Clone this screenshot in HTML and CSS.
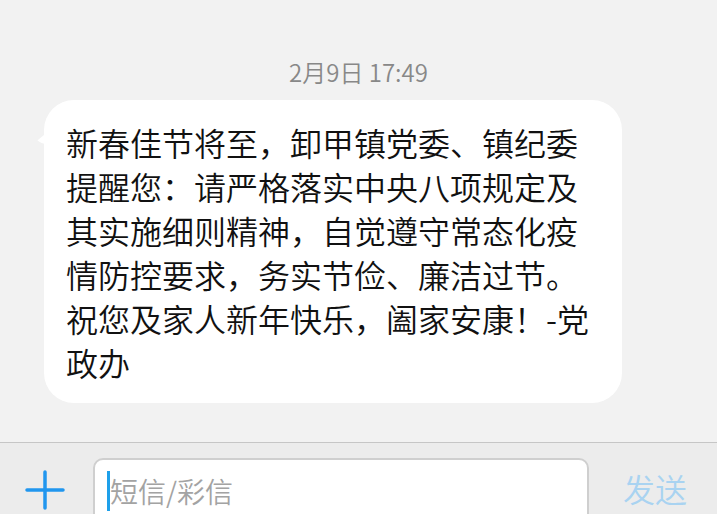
FILE: index.html
```html
<!DOCTYPE html>
<html lang="zh-CN">
  <head>
    <meta charset="UTF-8" />
    <meta name="viewport" content="width=device-width, initial-scale=1.0" />
    <title>短信</title>
    <link rel="stylesheet" href="styles.css">
  </head>
  <body>
    <div class="screen">
      <!-- danh sách tin nhắn -->
      <div class="messages">
        <div class="time">2月9日 17:49</div>
        <div class="bubble">新春佳节将至，卸甲镇党委、镇纪委提醒您：请严格落实中央八项规定及其实施细则精神，自觉遵守常态化疫情防控要求，务实节俭、廉洁过节。祝您及家人新年快乐，阖家安康！-党政办</div>
      </div>
      <!-- thanh nhập -->
      <div class="composer">
        <div class="plus">
          <svg width="40" height="40" viewBox="0 0 40 40">
            <path d="M2 20H38M20 2V38" stroke="#2196ee" stroke-width="3.5" stroke-linecap="round" fill="none" />
          </svg>
        </div>
        <div class="input">
          <span class="caret"></span>
          <span class="placeholder">短信/彩信</span>
        </div>
        <div class="send">发送</div>
      </div>
    </div>
  </body>
</html>
```

FILE: styles.css
```css
* {
  margin: 0;
  padding: 0;
  box-sizing: border-box;
}
body {
  width: 717px;
  height: 514px;
  overflow: hidden;
  background: #f2f2f2;
  font-family: "Noto Sans CJK SC", "Noto Sans", sans-serif;
  font-weight: 350;
}
.screen {
  height: 514px;
  display: flex;
  flex-direction: column;
}
.messages {
  flex: 1;
  padding-top: 56px;
}
.time {
  text-align: center;
  font-size: 24px;
  line-height: 32px;
  color: #888;
  margin-bottom: 12px;
}
.bubble {
  position: relative;
  margin-left: 44px;
  width: 578px;
  background: #fff;
  border-radius: 30px;
  padding: 20px 26px 19px 22px;
  font-size: 32px;
  line-height: 44px;
  color: #111;
}
.bubble::before {
  content: "";
  position: absolute;
  left: -11px;
  top: 26px;
  width: 22px;
  height: 18px;
  background: #fff;
  border-radius: 0 0 0 14px;
  clip-path: polygon(0 100%, 100% 0, 100% 100%);
}
.composer {
  height: 72px;
  border-top: 1px solid #c6c6c6;
  background: #ececec;
  display: flex;
  align-items: flex-start;
  padding-top: 15px;
}
.plus {
  width: 93px;
  display: flex;
  justify-content: center;
  padding-top: 12px;
  padding-right: 3px;
}
.input {
  width: 496px;
  height: 66px;
  background: #fff;
  border: 2px solid #cfcfcf;
  border-radius: 10px;
  display: flex;
  align-items: center;
  padding-left: 12px;
  padding-bottom: 8px;
}
.caret {
  width: 3px;
  height: 40px;
  background: #1ea0ea;
  margin-top: 8px;
}
.placeholder {
  font-size: 28px;
  color: #a3a3a3;
  margin-top: 8px;
}
.send {
  flex: 1;
  text-align: center;
  font-size: 32px;
  line-height: 60px;
  color: #a9d3f1;
  padding-left: 4px;
}
```
